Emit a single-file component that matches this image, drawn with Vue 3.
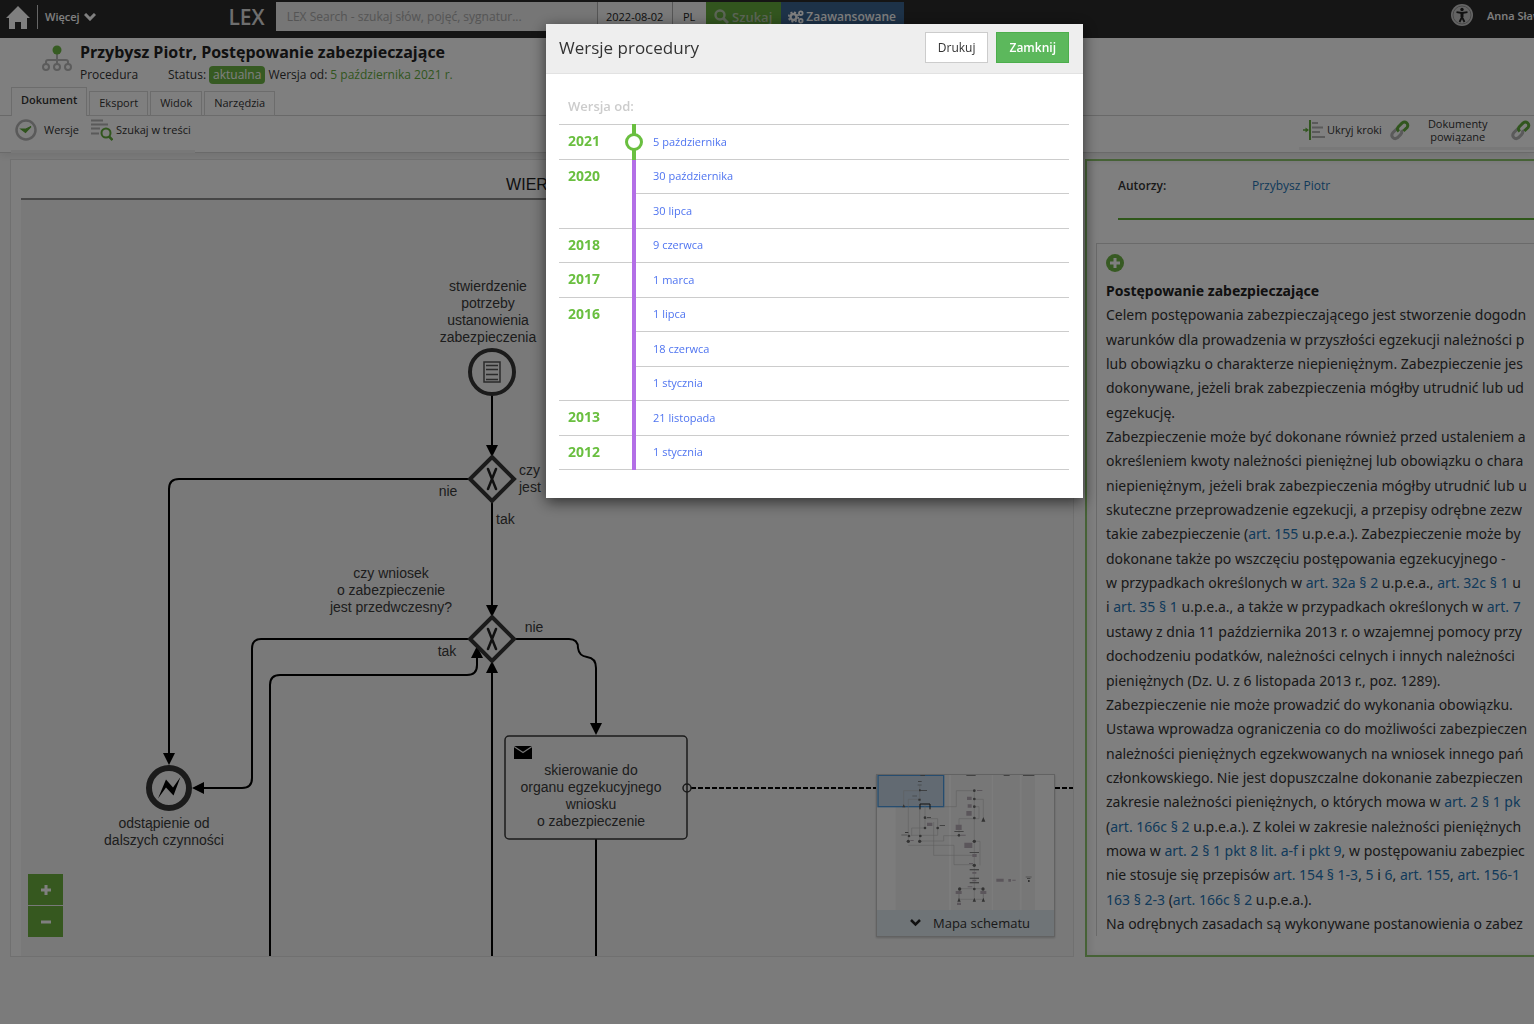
<script setup>
import { ref } from 'vue'

const query = ref('')
const date = ref('2022-08-02')
const open = ref(true)

const tabs = ['Dokument', 'Eksport', 'Widok', 'Narzędzia']

const versions = [
  { year: '2021', days: ['5 października'], current: true },
  { year: '2020', days: ['30 października', '30 lipca'] },
  { year: '2018', days: ['9 czerwca'] },
  { year: '2017', days: ['1 marca'] },
  { year: '2016', days: ['1 lipca', '18 czerwca', '1 stycznia'] },
  { year: '2013', days: ['21 listopada'] },
  { year: '2012', days: ['1 stycznia'] },
]

const rows = versions.flatMap((v) =>
  v.days.map((day, i) => ({
    day,
    year: i === 0 ? v.year : null,
    span: v.days.length,
    current: Boolean(v.current),
  })),
)

// Square brackets mark the references that are links.
const article = [
  [
    'Celem postępowania zabezpieczającego jest stworzenie dogodn',
    'warunków dla prowadzenia w przyszłości egzekucji należności p',
    'lub obowiązku o charakterze niepieniężnym. Zabezpieczenie jes',
    'dokonywane, jeżeli brak zabezpieczenia mógłby utrudnić lub ud',
    'egzekucję.',
  ],
  [
    'Zabezpieczenie może być dokonane również przed ustaleniem a',
    'określeniem kwoty należności pieniężnej lub obowiązku o chara',
    'niepieniężnym, jeżeli brak zabezpieczenia mógłby utrudnić lub u',
    'skuteczne przeprowadzenie egzekucji, a przepisy odrębne zezw',
    'takie zabezpieczenie ([art. 155] u.p.e.a.). Zabezpieczenie może by',
    'dokonane także po wszczęciu postępowania egzekucyjnego -',
    'w przypadkach określonych w [art. 32a § 2] u.p.e.a., [art. 32c § 1] u',
    'i [art. 35 § 1] u.p.e.a., a także w przypadkach określonych w [art. 7]',
    'ustawy z dnia 11 października 2013 r. o wzajemnej pomocy przy',
    'dochodzeniu podatków, należności celnych i innych należności',
    'pieniężnych (Dz. U. z 6 listopada 2013 r., poz. 1289).',
  ],
  ['Zabezpieczenie nie może prowadzić do wykonania obowiązku.'],
  [
    'Ustawa wprowadza ograniczenia co do możliwości zabezpieczen',
    'należności pieniężnych egzekwowanych na wniosek innego pań',
    'członkowskiego. Nie jest dopuszczalne dokonanie zabezpieczen',
    'zakresie należności pieniężnych, o których mowa w [art. 2 § 1 pk]',
    '([art. 166c § 2] u.p.e.a.). Z kolei w zakresie należności pieniężnych',
    'mowa w [art. 2 § 1 pkt 8 lit. a-f] i [pkt 9], w postępowaniu zabezpiec',
    'nie stosuje się przepisów [art. 154 § 1-3], [5] i [6], [art. 155], [art. 156-1]',
    '[163 § 2-3] ([art. 166c § 2] u.p.e.a.).',
  ],
  ['Na odrębnych zasadach są wykonywane postanowienia o zabez'],
].map((p) =>
  p.map((line) =>
    line
      .split(/(\[[^\]]+\])/)
      .filter(Boolean)
      .map((t) => (t[0] === '[' ? { link: true, text: t.slice(1, -1) } : { link: false, text: t })),
  ),
)

const edges = [
  'M492 395V446',
  'M469 479H179Q169 479 169 489V755',
  'M492 502V606',
  'M469 639H261Q252 639 252 649V778Q252 788 242 788H203',
  'M270 956V685Q270 675 280 675H467Q477 675 477 665V656',
  'M492 956V672',
  'M514 639H569Q578 639 578 648Q579 656 587 657Q596 658 596 668V724',
  'M596 839V956',
]

const heads = [
  'M486 445h12l-6 12z',
  'M163 753h12l-6 12z',
  'M486 605h12l-6 12z',
  'M204 782v12l-12-6z',
  'M471 658h12l-6-12z',
  'M486 673h12l-6-12z',
  'M590 723h12l-6 12z',
]

const labels = [
  { x: 488, y: 291, lines: ['stwierdzenie', 'potrzeby', 'ustanowienia', 'zabezpieczenia'] },
  { x: 448, y: 496, lines: ['nie'] },
  { x: 496, y: 524, lines: ['tak'], start: true },
  { x: 519, y: 475, lines: ['czy', 'jest'], start: true },
  { x: 391, y: 578, lines: ['czy wniosek', 'o zabezpieczenie', 'jest przedwczesny?'] },
  { x: 534, y: 632, lines: ['nie'] },
  { x: 447, y: 656, lines: ['tak'] },
  { x: 164, y: 828, lines: ['odstąpienie od', 'dalszych czynności'] },
  { x: 591, y: 775, lines: ['skierowanie do', 'organu egzekucyjnego', 'wniosku', 'o zabezpieczenie'] },
]
</script>

<template>
  <div class="page">
    <header class="topbar">
      <a href="#" class="home" aria-label="Strona główna">
        <svg width="24" height="24" viewBox="0 0 24 24"><path fill="#fff" d="M12 0 24 12h-3v11h-6v-7H9v7H3V12H0z" /></svg>
      </a>
      <button class="more" type="button">
        Więcej
        <svg width="12" height="8" viewBox="0 0 12 8"><path d="M1 1l5 5 5-5" fill="none" stroke="#fff" stroke-width="3" /></svg>
      </button>
      <div class="logo">LEX</div>
      <form class="search" @submit.prevent>
        <input v-model="query" class="query" type="text" aria-label="Szukaj" placeholder="LEX Search - szukaj słów, pojęć, sygnatur..." />
        <input v-model="date" class="date" type="text" aria-label="Data" />
        <button type="button" class="lang">PL</button>
        <button type="submit" class="go">
          <svg width="15" height="15" viewBox="0 0 15 15"><circle cx="6" cy="6" r="4.500" fill="none" stroke="#b9cbae" stroke-width="2.400" /><path d="M9.500 9.500 14 14" stroke="#b9cbae" stroke-width="3" /></svg>
          Szukaj
        </button>
        <button type="button" class="advanced">
          <svg width="16" height="14" viewBox="0 0 16 14" fill="none" stroke="#fff">
            <circle cx="5.500" cy="7" r="3" stroke-width="2.400" />
            <circle cx="5.500" cy="7" r="4.800" stroke-width="1.600" stroke-dasharray="2 1.770" />
            <circle cx="12.800" cy="3.200" r="1.800" stroke-width="1.800" />
            <circle cx="12.800" cy="10.800" r="1.800" stroke-width="1.800" />
          </svg>
          Zaawansowane
        </button>
      </form>
      <div class="user">
        <svg width="22" height="22" viewBox="0 0 22 22">
          <circle cx="11" cy="11" r="11" fill="#c9c9c9" />
          <circle cx="11" cy="11" r="9" fill="none" stroke="#8f8f8f" stroke-width="1" />
          <circle cx="11" cy="5.500" r="1.700" fill="#222" />
          <path d="M5.500 8.200 11 9l5.500-.8M11 9v4l-2.500 5M11 13l2.500 5" fill="none" stroke="#222" stroke-width="1.800" />
          <path d="M9.500 8.500h3V13h-3z" fill="#222" />
        </svg>
        <span>Anna Sław</span>
      </div>
    </header>

    <section class="dochead">
      <svg class="docicon" width="30" height="28" viewBox="0 0 30 28">
        <path d="M15 8v11M4 19v-2q0-2 2-2h18q2 0 2 2v2" fill="none" stroke="#b8b8b8" stroke-width="2" />
        <g fill="none" stroke="#b8b8b8" stroke-width="2"><circle cx="4" cy="22" r="3" /><circle cx="15" cy="22" r="3" /><circle cx="26" cy="22" r="3" /></g>
        <circle cx="15" cy="5" r="4.500" fill="#6cb844" />
      </svg>
      <div>
        <h1>Przybysz Piotr, Postępowanie zabezpieczające</h1>
        <p class="meta">
          <span class="kind">Procedura</span>
          <span>Status:</span>
          <span class="badge">aktualna</span>
          <span>Wersja od:</span>
          <span class="green">5 października 2021 r.</span>
        </p>
      </div>
    </section>

    <nav class="tabs">
      <button v-for="(tab, i) in tabs" :key="tab" type="button" :class="{ active: i === 0 }">{{ tab }}</button>
    </nav>

    <div class="toolbar">
      <div class="group left">
        <button type="button" class="tool">
          <svg width="22" height="22" viewBox="0 0 22 22"><circle cx="11" cy="11" r="9.500" fill="none" stroke="#b4b4b4" stroke-width="2.500" /><path d="M6 10l4.500 3.500L16 7.500 11 10z" fill="#5fa83a" stroke="#5fa83a" stroke-width="1.200" /></svg>
          Wersje
        </button>
        <button type="button" class="tool find">
          <svg width="22" height="22" viewBox="0 0 22 22"><path d="M0 1.500h12M0 5.500h17M0 9.500h9M0 14.500h8" stroke="#b4b4b4" stroke-width="2" /><circle cx="15" cy="14" r="4.500" fill="none" stroke="#62ad3c" stroke-width="2" /><path d="M18 17.500l3.500 3.500" stroke="#62ad3c" stroke-width="2.500" /></svg>
          Szukaj w treści
        </button>
      </div>
      <div class="group right">
        <button type="button" class="tool steps">
          <svg width="22" height="20" viewBox="0 0 22 20"><path d="M7 0v20" stroke="#62ad3c" stroke-width="2" /><path d="M0 10h3" stroke="#62ad3c" stroke-width="1.500" /><path d="M2.500 7.500 6 10l-3.500 2.500z" fill="#62ad3c" /><path d="M9 3h6M9 7.500h11M9 12h8M9 17h13" stroke="#b4b4b4" stroke-width="2" /></svg>
          Ukryj kroki
        </button>
        <button type="button" class="tool linked">
          <svg width="20" height="22" viewBox="0 0 20 22" fill="none" stroke-width="3">
            <path d="M7 9.500 2.800 13.800q-2 2.400 0 4.600t4.600.4l3.400-3.400q1.800-2.200.4-4.200" stroke="#b4b4b4" />
            <path d="M8.800 12.500q-2.400-2.400-.4-4.800l3.800-3.800q2.400-1.800 4.400 0t.6 4.400L13.400 12" stroke="#62ad3c" />
          </svg>
          <span>Dokumenty<br />powiązane</span>
        </button>
        <button type="button" class="tool" aria-label="Powiązania">
          <svg width="20" height="22" viewBox="0 0 20 22" fill="none" stroke-width="3">
            <path d="M7 9.500 2.800 13.800q-2 2.400 0 4.600t4.600.4l3.400-3.400q1.800-2.200.4-4.200" stroke="#b4b4b4" />
            <path d="M8.800 12.500q-2.400-2.400-.4-4.800l3.800-3.800q2.400-1.800 4.400 0t.6 4.400L13.400 12" stroke="#62ad3c" />
          </svg>
        </button>
      </div>
    </div>

    <main class="workspace">
      <section class="schema">
        <h2>WIERZYCIEL</h2>
        <svg class="canvas" height="756" viewBox="21 200 1052 756" preserveAspectRatio="xMinYMin meet">
          <g fill="none" stroke="#000" stroke-width="2"><path v-for="d in edges" :key="d" :d="d" /></g>
          <path d="M691 788H1073" stroke="#000" stroke-width="2" stroke-dasharray="5 2" />
          <g fill="#000"><path v-for="d in heads" :key="d" :d="d" /></g>
          <g fill="#f6f6f6" stroke="#363636">
            <circle cx="492" cy="372" r="22" stroke-width="4" />
            <path d="M492 457l22 22-22 22-22-22zM492 617l22 22-22 22-22-22z" fill="none" stroke-width="4" />
            <circle cx="169" cy="788" r="20" stroke-width="6" />
            <rect x="505" y="736" width="182" height="103" rx="4" fill="none" stroke-width="1.500" />
            <circle cx="687" cy="788" r="4" stroke-width="1.500" fill="none" />
          </g>
          <g fill="none" stroke="#555" stroke-width="1.500">
            <rect x="484" y="362" width="16" height="20" />
            <path d="M486 365.500h12M486 369.500h12M486 374.500h12M486 379.500h12" />
          </g>
          <path d="M488 469l8 20M496 469l-8 20M488 629l8 20M496 629l-8 20" stroke="#222" stroke-width="2.500" stroke-linecap="round" />
          <path d="M158 798.500l8-19 7 8 7.500-10.500-7 18.500-7.500-8z" fill="#000" />
          <path d="M514 746h18v13h-18z" fill="#000" />
          <path d="M514 746.500l9 6 9-6" fill="none" stroke="#e8e8e8" stroke-width="1.300" />
          <text v-for="l in labels" :key="l.x + '-' + l.y" :text-anchor="l.start ? 'start' : 'middle'">
            <tspan v-for="(t, i) in l.lines" :key="t" :x="l.x" :y="l.y + i * 17">{{ t }}</tspan>
          </text>
        </svg>

        <div class="zoom">
          <button type="button" aria-label="Powiększ"><svg width="12" height="12" viewBox="0 0 12 12"><path d="M6 1v10M1 6h10" stroke="#fff" stroke-width="3" /></svg></button>
          <button type="button" aria-label="Pomniejsz"><svg width="12" height="12" viewBox="0 0 12 12"><path d="M1 6h10" stroke="#fff" stroke-width="3" /></svg></button>
        </div>

        <div class="minimap">
          <svg width="177" height="135" viewBox="52 47 531 405">
            <path d="M108 47h160v405H108zM274 47h122v405H274zM400 47h80v405h-80zM486 47h40v405h-40z" fill="#eee" />
            <rect x="55" y="48" width="197" height="94" fill="#c4d4e4" stroke="#4c9be0" stroke-width="4" />
            <path d="M180 78V245M180 94h-48v45M180 120h-34v125M146 258h137v58h60M196 136v70h-40v22M196 178h38v50h-80M180 245h72v-16h46M222 188v100h120M252 142h38V94h54M344 94v330M344 120h27v55M344 142h14v36h-60v50M344 246h17v72M298 388h73v32H298zM298 400v24M371 400v24" fill="none" stroke="#b8b8b8" stroke-width="1.500" />
            <g fill="#666">
              <path d="M182 46h14v3h-14zM320 46h28v3h-28zM432 46h18v3h-18zM490 46h34v3h-34z" />
              <path d="M128 144l4-9 5 9zM175 66h11v2h-11zM174 76h12v2h-12zM182 93h20v2h-20zM158 109h14v2h-14zM176 118h7v6h-7zM178 90h5v6h-5z" />
              <circle cx="196" cy="175" r="4" /><circle cx="196" cy="206" r="4" /><circle cx="234" cy="206" r="4" /><circle cx="148" cy="230" r="4" /><circle cx="182" cy="230" r="4" /><circle cx="146" cy="246" r="5" /><circle cx="180" cy="246" r="5" />
              <circle cx="344" cy="94" r="4" /><circle cx="344" cy="119" r="4" /><circle cx="344" cy="142" r="4" /><circle cx="344" cy="176" r="4" /><circle cx="298" cy="228" r="4" /><circle cx="344" cy="246" r="5" /><circle cx="344" cy="318" r="5" /><circle cx="300" cy="389" r="5" /><circle cx="344" cy="389" r="4" /><circle cx="370" cy="389" r="5" />
              <path d="M365 187l6-14 6 14zM293 427l5-12 5 12zM339 427l5-12 5 12zM366 427l5-12 5 12zM125 226h18v2h-18zM136 218h10v3h-10zM202 173h12v2h-12zM240 198h16v2h-16z" />
              <path d="M330 330h28v3h-28zM330 355h28v3h-28zM330 369h28v3h-28zM330 278h28v2h-28zM284 215h28v2h-28zM498 352h18v2h-18zM502 357h10v2h-10zM505 362h5v6h-5z" />
            </g>
            <g fill="#b7adb7">
              <path d="M352 92h16v3h-16zM322 112h14v10h-14zM324 135h12v10h-12zM320 155h16v14h-16zM288 196h18v16h-18zM202 190h16v10h-16zM314 250h24v16h-24zM338 284h13v9h-13zM328 311h12v3h-12zM338 338h12v5h-12zM338 361h12v5h-12zM324 381h14v3h-14zM288 395h18v9h-18zM362 395h18v9h-18zM292 430h12v7h-12zM410 358h22v9h-22zM446 359h8v8h-8zM458 361h10v3h-10zM152 242h10v3h-10zM304 226h14v3h-14z" />
            </g>
            <path d="M181 150v-16h30v16" fill="none" stroke="#222" stroke-width="3" />
          </svg>
          <button type="button">
            <svg width="11" height="8" viewBox="0 0 11 8"><path d="M1 1l4.500 4.500L10 1" fill="none" stroke="#222" stroke-width="2.500" /></svg>
            Mapa schematu
          </button>
        </div>
      </section>

      <aside class="details">
        <dl>
          <dt>Autorzy:</dt>
          <dd><a href="#">Przybysz Piotr</a></dd>
        </dl>
        <article>
          <svg width="18" height="18" viewBox="0 0 18 18"><circle cx="9" cy="9" r="9" fill="#6fb546" /><path d="M9 4v10M4 9h10" stroke="#fff" stroke-width="3" /></svg>
          <div class="lines">
            <h3>Postępowanie zabezpieczające</h3>
            <p v-for="(p, i) in article" :key="i">
              <span v-for="(line, j) in p" :key="j" class="line"><template v-for="(t, k) in line" :key="k"><a v-if="t.link" href="#">{{ t.text }}</a><template v-else>{{ t.text }}</template></template></span>
            </p>
          </div>
        </article>
      </aside>
    </main>

    <div v-if="open" class="overlay">
      <div class="modal" role="dialog" aria-modal="true" aria-labelledby="modal-title">
        <div class="modal-head">
          <h2 id="modal-title">Wersje procedury</h2>
          <button type="button" class="btn">Drukuj</button>
          <button type="button" class="btn primary" @click="open = false">Zamknij</button>
        </div>
        <table>
          <caption>Wersja od:</caption>
          <tbody>
            <tr v-for="(row, i) in rows" :key="i" :class="{ current: row.current }">
              <th v-if="row.year" scope="rowgroup" :rowspan="row.span">{{ row.year }}</th>
              <td class="rail"><span v-if="row.current" class="marker"></span></td>
              <td class="day"><a href="#">{{ row.day }}</a></td>
            </tr>
          </tbody>
        </table>
      </div>
    </div>
  </div>
</template>

<style>
body {
  margin: 0;
  background: #f7f7f7;
}
</style>

<style scoped>
.page {
  min-height: 100vh;
  overflow: hidden;
  font: 12px/16px "Open Sans", "Noto Sans", sans-serif;
  color: #333;
  background: #f7f7f7;
}
button,
input {
  font: inherit;
  color: inherit;
  margin: 0;
  padding: 0;
  border: 0;
  border-radius: 0;
  background: none;
  box-sizing: border-box;
}
svg {
  flex: none;
  display: block;
}
a {
  color: #2474b5;
  text-decoration: none;
}
h1,
h2,
h3,
p,
dl,
dd {
  margin: 0;
}

.topbar {
  display: flex;
  height: 38px;
  background: #2a2a2a;
  color: #fff;
}
.home {
  padding: 6px 7px 0 6px;
}
.more {
  display: flex;
  align-items: center;
  gap: 4px;
  height: 24px;
  margin-top: 5px;
  padding-left: 7px;
  border-left: 1px solid #ccc;
  font-weight: 600;
  font-size: 11px;
}
.logo {
  width: 180px;
  padding-right: 11px;
  box-sizing: border-box;
  text-align: right;
  font: 600 21px/34px "Open Sans", sans-serif;
  color: #ddd;
}
.search {
  display: flex;
  height: 29px;
  margin-top: 2px;
}
.query {
  width: 321px;
  padding-left: 11px;
  background: #ececec;
}
.query::placeholder {
  color: #aaa;
  opacity: 1;
}
.date,
.lang {
  width: 75px;
  border-left: 1px solid #aaa;
  background: #f4f4f4;
  color: #222;
  text-align: center;
}
.date {
  font-size: 11px;
}
.lang {
  width: 34px;
  font-size: 11px;
}
.go,
.advanced {
  display: flex;
  align-items: center;
  justify-content: center;
  gap: 3px;
  width: 75px;
  background: #65ab3d;
  font-weight: 600;
  font-size: 13px;
  color: #b9cbae;
}
.advanced {
  width: 123px;
  gap: 2px;
  background: #3b6591;
  color: #fff;
  font-size: 12px;
}
.user {
  display: flex;
  flex: none;
  width: 83px;
  gap: 14px;
  margin-left: auto;
  padding-top: 4px;
  line-height: 24px;
  font-size: 11px;
  font-weight: 600;
  white-space: nowrap;
  overflow: hidden;
}

.dochead {
  display: flex;
  gap: 8px;
  height: 49px;
  padding-left: 42px;
  background: #fff;
}
.docicon {
  margin-top: 7px;
}
h1 {
  padding-top: 3px;
  font-size: 16px;
  line-height: 22px;
  font-weight: 700;
  color: #222;
}
.meta {
  display: flex;
  gap: 3px;
  padding-top: 3px;
  line-height: 18px;
}
.kind {
  width: 85px;
}
.badge {
  padding: 0 4px;
  border-radius: 4px;
  background: #6db544;
  color: #fff;
}
.green {
  color: #65ad3e;
}

.tabs {
  display: flex;
  align-items: flex-end;
  gap: 2px;
  height: 29px;
  padding-left: 11px;
  background: #fff;
  box-shadow: inset 0 -1px #d4d4d4;
}
.tabs button {
  height: 25px;
  padding: 0 9px 2px;
  border: 1px solid #d8d8d8;
  font-size: 11px;
}
.tabs .active {
  height: 29px;
  padding-bottom: 4px;
  border-bottom: 0;
  background: #fff;
  font-weight: 600;
}

.toolbar {
  display: flex;
  justify-content: space-between;
  height: 36px;
  padding-left: 11px;
  background: #fff;
  box-shadow: 0 1px #d4d4d4, 0 4px 8px rgba(0, 0, 0, 0.08);
}
.group {
  display: flex;
  height: 34px;
  border-bottom: 3px solid #f0f0f0;
}
.left {
  padding: 0 4px;
}
.tool {
  display: flex;
  align-items: center;
  height: 27px;
  gap: 7px;
  font-size: 11px;
  line-height: 13px;
  text-align: center;
  white-space: nowrap;
}
.find {
  margin-left: 12px;
  gap: 3px;
}
.right {
  width: 235px;
  padding-left: 4px;
  box-sizing: border-box;
}
.steps {
  gap: 2px;
}
.linked {
  margin: 0 23px 0 8px;
  gap: 18px;
}

.workspace {
  display: flex;
  gap: 11px;
  padding: 7px 0 0 10px;
}
.schema {
  position: relative;
  flex: 1;
  min-width: 0;
  padding-left: 10px;
  border: 1px solid #e0e0e0;
  background: #fcfcfc;
}
.schema h2 {
  height: 38px;
  padding-left: 16px;
  border-bottom: 2px solid #8c8c8c;
  font: 16px/50px "Liberation Sans", Arial, sans-serif;
  text-align: center;
  color: #222;
}
.canvas {
  width: 100%;
  background: #f3f3f3;
}
.canvas text {
  font: 14px "Liberation Sans", Arial, sans-serif;
  fill: #3a3a3a;
}
.zoom {
  position: absolute;
  left: 17px;
  bottom: 19px;
  display: grid;
  gap: 1px;
}
.zoom button {
  display: grid;
  place-items: center;
  width: 35px;
  height: 31px;
  background: #6cb13f;
}
.minimap {
  position: absolute;
  right: 18px;
  bottom: 19px;
  border: 1px solid #c4c4c4;
  background: #f8f8f8;
  box-shadow: 0 1px 2px rgba(0, 0, 0, 0.2);
}
.minimap button {
  display: flex;
  align-items: center;
  gap: 12px;
  width: 100%;
  height: 26px;
  padding-left: 33px;
  background: #dfe8ee;
  font-size: 13px;
}

.details {
  display: flex;
  flex-direction: column;
  flex: 0 0 449px;
  box-sizing: border-box;
  padding: 0 0 19px 9px;
  border: 2px solid #8cc46c;
  border-right: 0;
  background: #fff;
  box-shadow: inset 4px 0 6px rgba(0, 0, 0, 0.08);
  overflow: hidden;
}
dl {
  display: flex;
  height: 57px;
  margin-left: 22px;
  border-bottom: 2px solid #5fae35;
  line-height: 50px;
}
dt {
  width: 134px;
  font-weight: 600;
}
article {
  display: flex;
  flex: 1;
  flex-direction: column;
  margin-top: 23px;
  padding: 10px 0 0 9px;
  border: 1px solid #d4d4d4;
  border-width: 1px 0 0 1px;
}
.lines {
  display: flex;
  flex: 1;
  flex-direction: column;
  justify-content: space-between;
  padding-top: 7px;
  font: 14px/24px "Noto Sans", "Open Sans", sans-serif;
  white-space: nowrap;
}
.lines p {
  display: contents;
}
h3 {
  font: 700 14px/24px "Noto Sans", "Open Sans", sans-serif;
  color: #222;
}

.overlay {
  position: fixed;
  inset: 0;
  z-index: 10;
  display: flex;
  align-items: flex-start;
  padding: 24px 0 0 546px;
  background: rgba(0, 0, 0, 0.5);
}
.modal {
  width: 537px;
  padding-bottom: 28px;
  background: #fff;
  box-shadow: 0 4px 14px rgba(0, 0, 0, 0.6);
}
.modal-head {
  display: flex;
  gap: 8px;
  height: 49px;
  padding: 0 14px 0 13px;
  border-bottom: 1px solid #e2e2e2;
  background: #eee;
}
.modal-head h2 {
  flex: 1;
  font-size: 17px;
  line-height: 47px;
  font-weight: 400;
}
.btn {
  height: 31px;
  margin-top: 8px;
  padding: 0 12px;
  border: 1px solid #ccc;
  background: #fff;
}
.primary {
  border-color: #4cae4c;
  background: #5cb85c;
  color: #fff;
  font-weight: 600;
}
table {
  width: 510px;
  height: 346px;
  margin: 0 14px 0 13px;
  border-collapse: collapse;
  table-layout: fixed;
}
caption {
  height: 50px;
  padding-left: 9px;
  text-align: left;
  font-size: 13px;
  line-height: 64px;
  font-weight: 600;
  color: #ccc;
}
tr > * {
  padding: 0;
  border: solid #ccc;
  border-width: 1px 0;
}
th {
  width: 64px;
  padding: 7px 0 0 9px;
  vertical-align: top;
  text-align: left;
  font-size: 14px;
  line-height: 18px;
  font-weight: 700;
  color: #6abf40;
}
.rail {
  position: relative;
  width: 4px;
  border-color: #b36fe6;
  background: #b36fe6;
}
.current .rail {
  border-color: #6abf40;
  background: #6abf40;
}
.marker {
  position: absolute;
  left: -7px;
  top: 8px;
  width: 12px;
  height: 12px;
  border: 3px solid #6abf40;
  border-radius: 50%;
  background: #fff;
}
.day {
  height: 33px;
  padding-left: 17px;
  font-size: 11px;
}
.day a {
  color: #4f74f0;
}
</style>
